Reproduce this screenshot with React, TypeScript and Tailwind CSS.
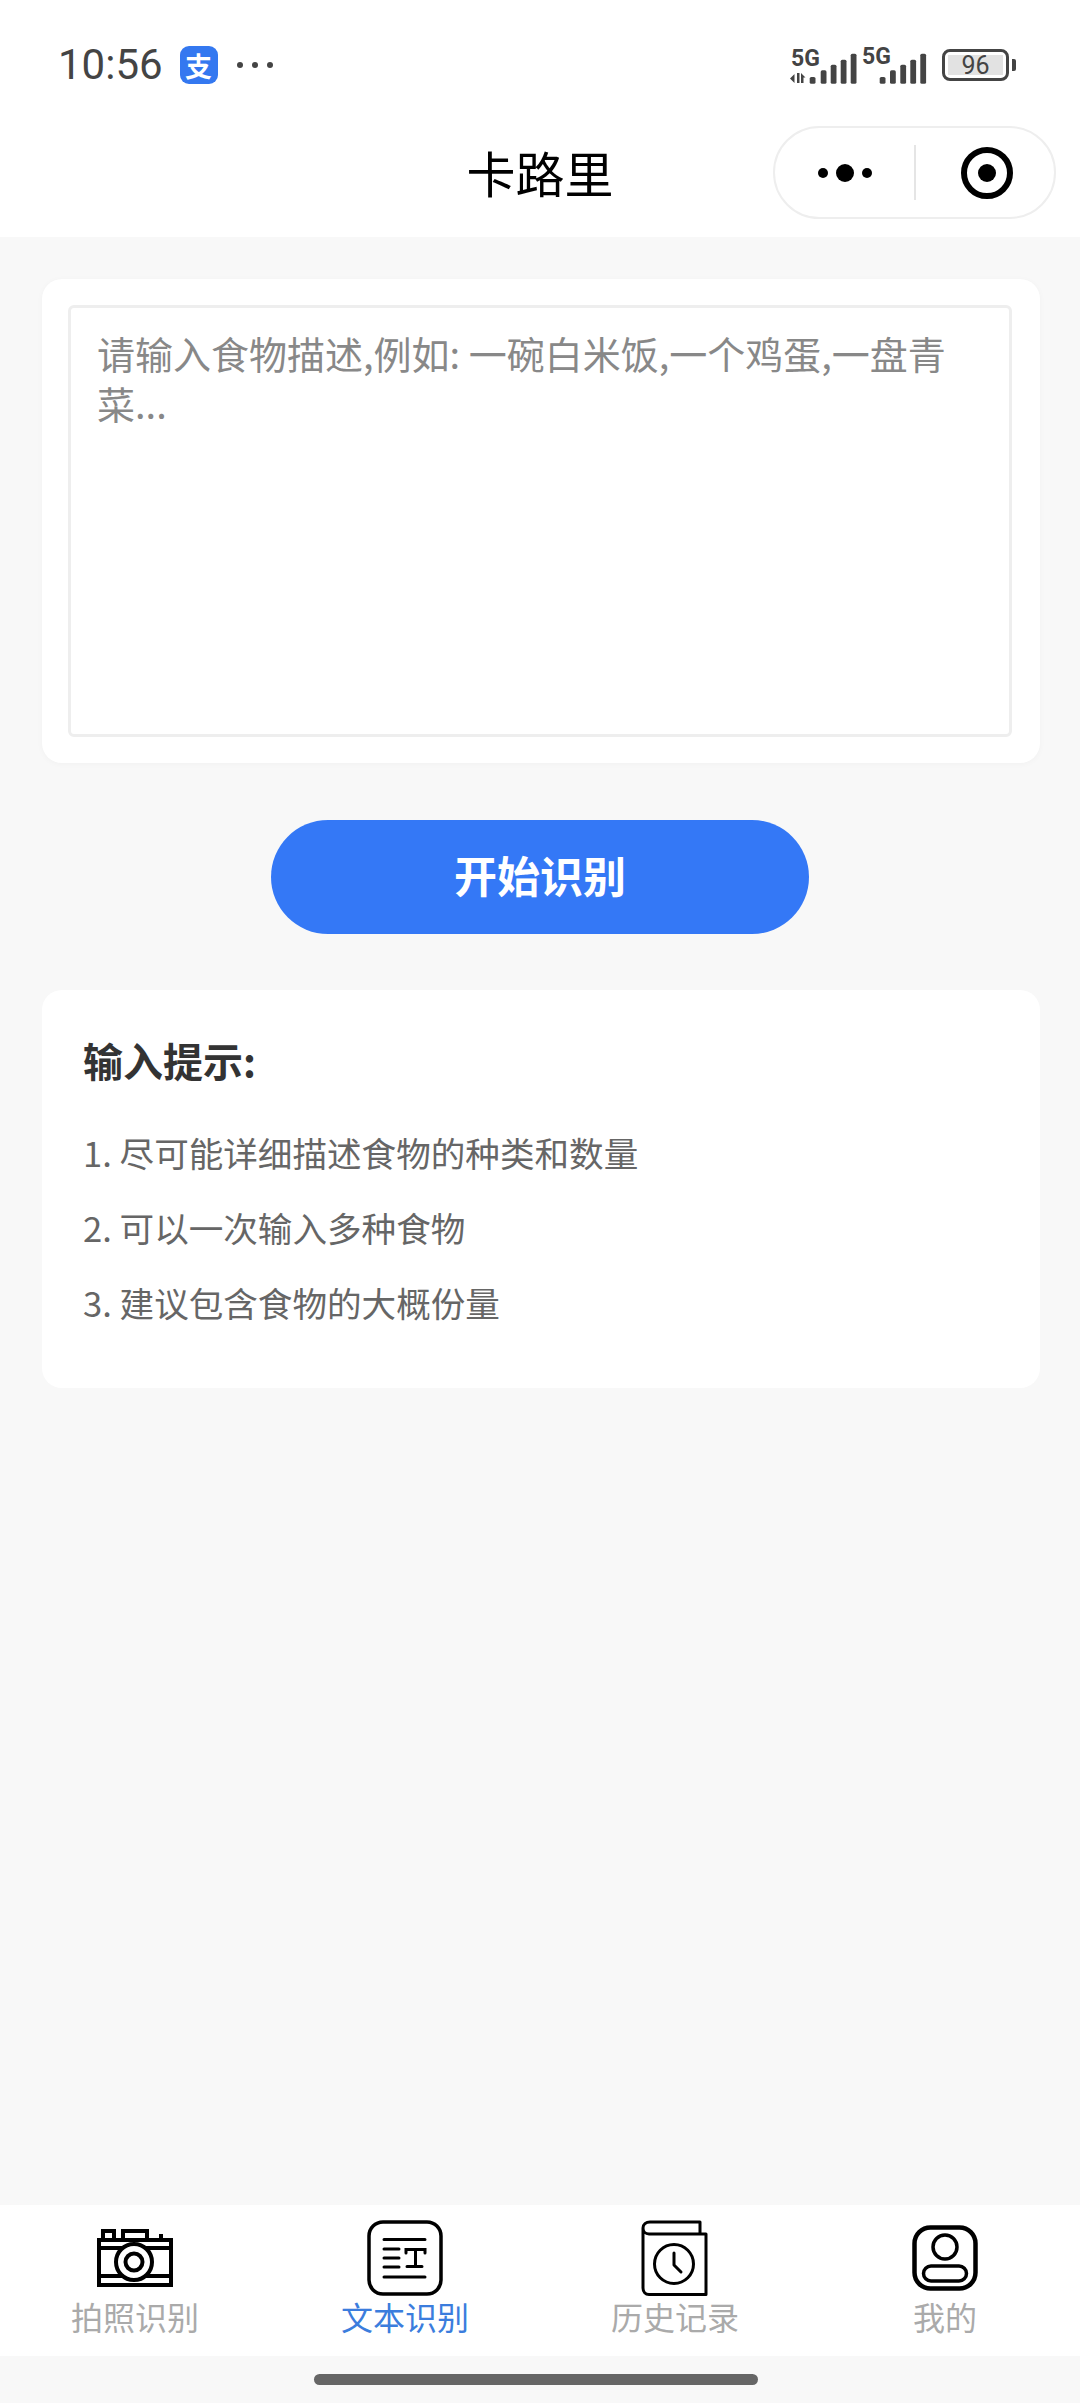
import React from "react";

const cjk = "font-['Noto_Sans_CJK_SC','Noto_Sans',sans-serif]";

function SignalIcons() {
  const tops = [28, 21.3, 15.7, 10.7, 4.7];
  const first = [19.7, 30.7, 40.7, 50.7, 60.7];
  const second = [89.7, 100, 110.3, 120.3, 130.3];
  return (
    <svg width="137" height="48" viewBox="0 -8 137 48" fill="#444">
      <text x="1" y="16.5" fontSize="23" fontWeight="700" fontFamily="Roboto, sans-serif">5G</text>
      <text x="72" y="15" fontSize="23" fontWeight="700" fontFamily="Roboto, sans-serif">5G</text>
      {/* data arrows */}
      <path d="M0 29.5 L4.5 25 V34 Z M7 24 H9.5 V34 H7 Z M11 24 L15.5 28.5 H13.5 V34 H11 Z" />
      {[...first, ...second].map((x, i) => (
        <rect key={i} x={x} y={tops[i % 5]} width="5.8" height={34.8 - tops[i % 5]} rx="1.6" />
      ))}
    </svg>
  );
}

function Battery() {
  return (
    <div className="flex items-center gap-[3px]">
      <div className="w-[67px] h-[32px] rounded-[8px] border-[3px] border-[#444] p-[3px] flex">
        <div className="flex-1 bg-[#e2e2e2] flex items-center justify-center text-[25px] leading-none text-[#444] font-['Roboto',sans-serif]">
          96
        </div>
      </div>
      <div className="w-[4px] h-[12px] rounded-r-[2px] bg-[#444]" />
    </div>
  );
}

function CameraIcon() {
  return (
    <svg width="76" height="58" viewBox="0 0 76 58" fill="none" stroke="#000" strokeWidth="4">
      <rect x="2" y="11" width="72" height="45" />
      <rect x="6" y="2" width="11" height="9" />
      <rect x="26" y="2" width="24" height="9" />
      <path d="M64 5V10" />
      <path d="M2 19H74M2 47H74" />
      <circle cx="37" cy="33" r="18" fill="#fff" />
      <circle cx="37" cy="33" r="8.5" />
    </svg>
  );
}

function TextIcon() {
  return (
    <svg width="76" height="76" viewBox="0 0 76 76" fill="none" stroke="#000" strokeWidth="3.5" strokeLinecap="round">
      <rect x="2" y="2" width="72" height="72" rx="14" />
      <path d="M17 19.5H58M17 57H58M17 29H32M17 38H32M17 47H32" strokeWidth="3" />
      <path d="M39 33V29.5H58V33M48.5 29.5V46.5M40 46.5H55" strokeWidth="3" />
    </svg>
  );
}

function BookClockIcon() {
  return (
    <svg width="67" height="76" viewBox="0 0 67 76" fill="none" stroke="#000" strokeWidth="3" strokeLinejoin="round" className="-ml-[2px]">
      <path d="M59 14V2H9C5 2 2 4.5 2 8V68C2 72 4.5 74.5 8 74.5H65V14H8C4.5 14 2 11.5 2 8" />
      <circle cx="33" cy="44" r="19.5" />
      <path d="M33 33V45L40 52" strokeLinecap="round" />
    </svg>
  );
}

function PersonIcon() {
  return (
    <svg width="66" height="66" viewBox="0 0 66 66" fill="none" stroke="#000">
      <rect x="2.5" y="2.5" width="61" height="61" rx="16" strokeWidth="4.5" />
      <circle cx="33" cy="22" r="12" strokeWidth="3.5" />
      <rect x="11.5" y="41" width="43" height="15" rx="7.5" strokeWidth="3.5" />
    </svg>
  );
}

const tabs = [
  { label: "拍照识别", icon: <CameraIcon /> },
  { label: "文本识别", icon: <TextIcon />, active: true },
  { label: "历史记录", icon: <BookClockIcon /> },
  { label: "我的", icon: <PersonIcon /> },
];

const tips = ["1. 尽可能详细描述食物的种类和数量", "2. 可以一次输入多种食物", "3. 建议包含食物的大概份量"];

export default function App() {
  return (
    <div className={`h-[2403px] w-[1080px] flex flex-col bg-[#f8f8f8] ${cjk}`}>
      {/* status bar + title bar */}
      <header className="h-[237px] bg-white">
        <div className="h-[126px] pt-[46px] pl-[58px] pr-[64px]">
          <div className="h-[38px] flex items-center">
            <span className="text-[42px] leading-none text-[#444] font-['Roboto',sans-serif]">10:56</span>
            <span className="ml-[17px] w-[38px] h-[38px] rounded-[9px] bg-[#3478f0] flex items-center justify-center text-[27px] leading-none font-semibold text-white">
              支
            </span>
            <div className="ml-[19px] flex gap-[9px]">
              <span className="w-[6px] h-[6px] rounded-full bg-[#444]" />
              <span className="w-[6px] h-[6px] rounded-full bg-[#444]" />
              <span className="w-[6px] h-[6px] rounded-full bg-[#444]" />
            </div>
            <div className="ml-auto flex items-center gap-[15px]">
              <SignalIcons />
              <Battery />
            </div>
          </div>
        </div>
        <div className="relative h-[93px] flex items-center justify-center">
          <h1 className="text-[49px] leading-none font-normal text-black -mt-[3px]">卡路里</h1>
          <div className="absolute right-[24px] top-0 w-[283px] h-[93px] rounded-full border-2 border-[#eeeeee] bg-white flex items-center">
            <div className="w-[139px] flex items-center justify-center gap-[8px]">
              <span className="w-[10px] h-[10px] rounded-full bg-black" />
              <span className="w-[18px] h-[18px] rounded-full bg-black" />
              <span className="w-[10px] h-[10px] rounded-full bg-black" />
            </div>
            <div className="w-[2px] h-[55px] bg-[#e5e5e5]" />
            <div className="flex-1 flex items-center justify-center pl-[4px]">
              <div className="w-[52px] h-[52px] rounded-full border-[6px] border-black flex items-center justify-center">
                <span className="w-[18px] h-[18px] rounded-full bg-black" />
              </div>
            </div>
          </div>
        </div>
      </header>

      <main className="flex-1 pl-[42px] pr-[40px] pt-[42px]">
        <div className="h-[484px] rounded-[20px] bg-white pt-[26px] pb-[26px] pl-[26px] pr-[28px] shadow-[0_1px_6px_rgba(0,0,0,0.03)]">
          <textarea
            className="w-full h-full resize-none block rounded-[6px] border-[3px] border-[#eeeeee] pt-[20px] pl-[26px] pr-[38px] text-[38px] leading-[50px] text-[#333] placeholder:text-[#888] outline-none"
            placeholder="请输入食物描述,例如: 一碗白米饭,一个鸡蛋,一盘青菜..."
          />
        </div>

        <button className="mt-[57px] ml-[229px] block w-[538px] h-[114px] rounded-full bg-[#3478f6] text-white text-[43px] font-bold pb-[6px]">
          开始识别
        </button>

        <section className="mt-[56px] h-[398px] rounded-[20px] bg-white px-[41px] pt-[46px]">
          <h2 className="text-[40px] leading-[48px] font-bold text-[#333]">输入提示:</h2>
          <ul className="mt-[44px] flex flex-col gap-[27px]">
            {tips.map((t) => (
              <li key={t} className="text-[34.6px] leading-[48px] text-[#666]">
                {t}
              </li>
            ))}
          </ul>
        </section>
      </main>

      <nav className="h-[151px] bg-white grid grid-cols-4 pt-[15px]">
        {tabs.map((tab) => (
          <div key={tab.label} className="flex flex-col items-center">
            <div className="h-[76px] flex items-center justify-center">{tab.icon}</div>
            <span className={`text-[32px] leading-[40px] ${tab.active ? "text-[#3b7ddd]" : "text-[#aaaaaa]"}`}>
              {tab.label}
            </span>
          </div>
        ))}
      </nav>

      {/* home indicator */}
      <div className="h-[47px] pt-[18px] pl-[314px]">
        <div className="w-[444px] h-[11px] rounded-full bg-[#666]" />
      </div>
    </div>
  );
}
